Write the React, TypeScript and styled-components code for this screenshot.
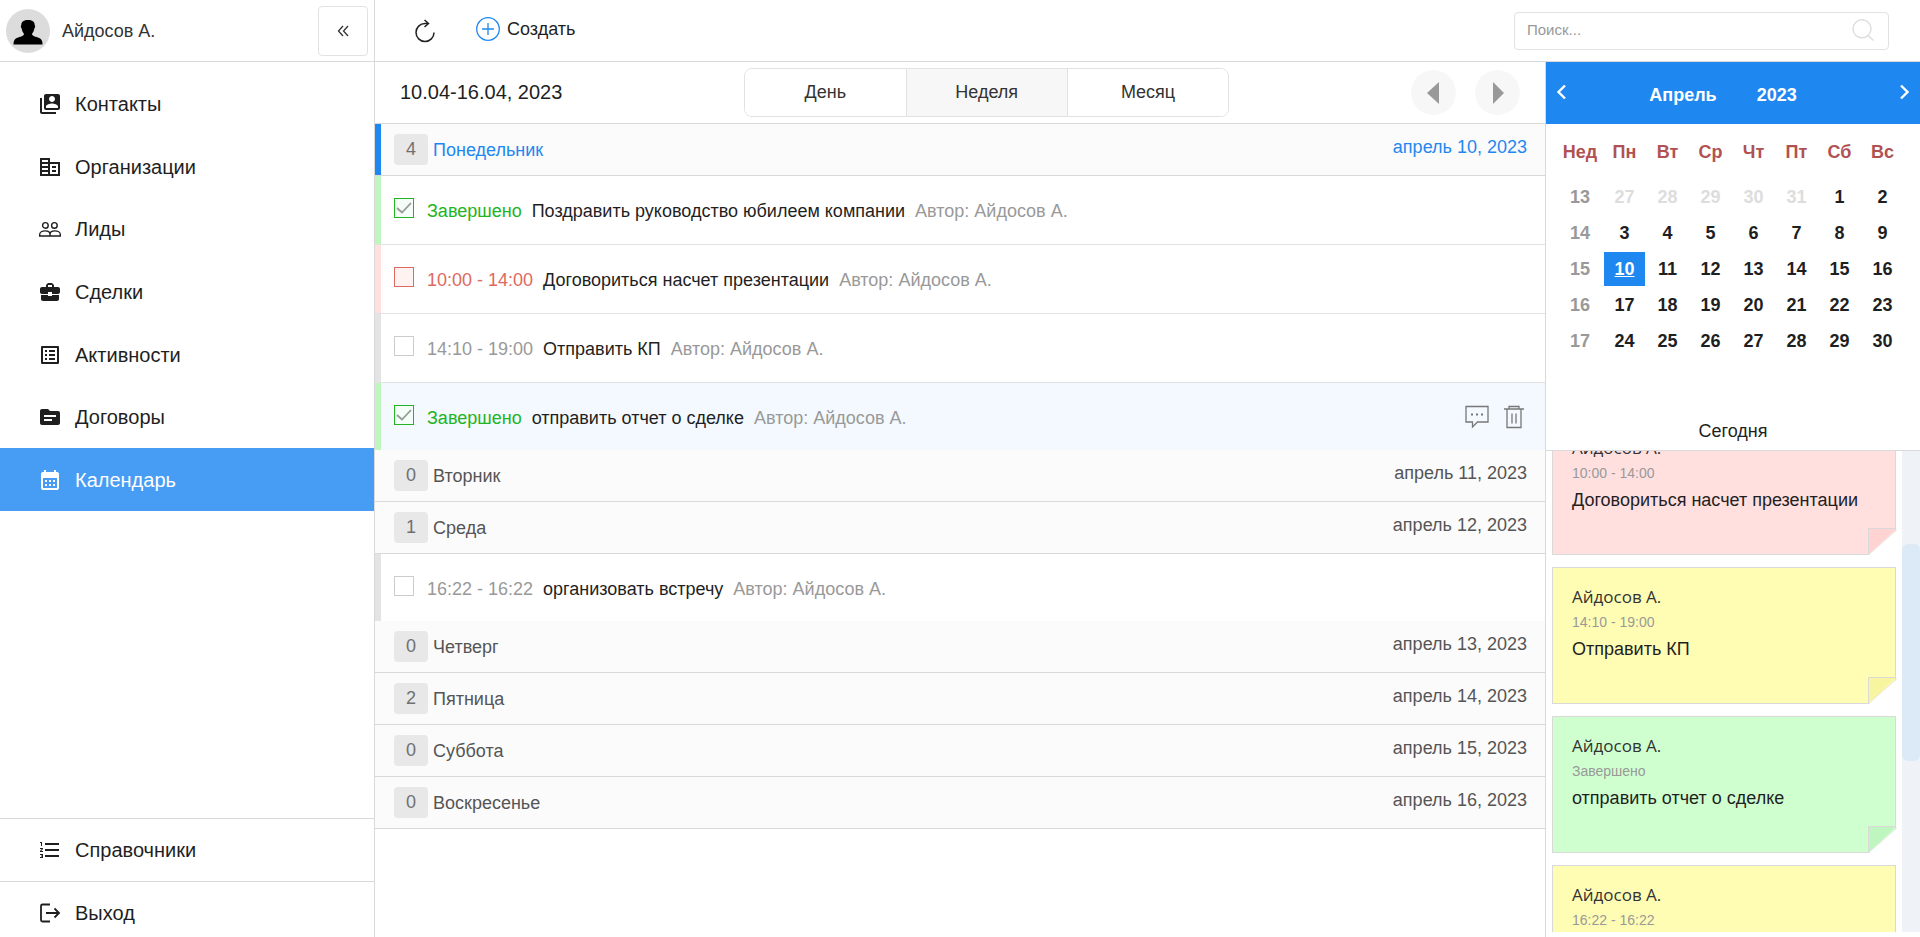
import React, { useLayoutEffect, useRef } from 'react';
import styled, { createGlobalStyle, css } from 'styled-components';
import {
  MdSwitchAccount,
  MdCorporateFare,
  MdBusinessCenter,
  MdOutlineListAlt,
  MdTopic,
  MdCalendarMonth,
  MdFormatListNumbered,
} from 'react-icons/md';

const sans = '"Liberation Sans", Arial, sans-serif';
const humanist = '"Open Sans", "Noto Sans", sans-serif';

const GlobalStyle = createGlobalStyle`
  * { box-sizing: border-box; }
  html, body, #root { height: 100%; }
  body {
    margin: 0;
    overflow: hidden;
    background: #fff;
    color: #1f1f1f;
    font: 18px/22px ${sans};
  }
  button, input { font: inherit; color: inherit; }
  button { margin: 0; padding: 0; border: 0; background: none; cursor: pointer; }
  a { color: inherit; text-decoration: none; }
  ul, h1, h2, p { margin: 0; padding: 0; font-weight: 400; font-size: inherit; list-style: none; }
`;

const line = '#d9d9d9';
const blue = '#1f87f0';

const Shell = styled.div`
  display: flex;
  height: 100vh;
  min-height: 600px;
  overflow: hidden;
`;

/* ---------- sidebar ---------- */

const Sidebar = styled.aside`
  flex: none;
  width: 375px;
  display: flex;
  flex-direction: column;
  border-right: 1px solid ${line};
`;

const Profile = styled.div`
  flex: none;
  height: 62px;
  display: flex;
  align-items: center;
  gap: 12px;
  padding: 0 6px;
  border-bottom: 1px solid ${line};
`;

const Avatar = styled.svg`
  width: 44px;
  height: 44px;
`;

const ProfileName = styled.span`
  flex: 1;
  color: #333;
`;

const CollapseButton = styled.button`
  width: 50px;
  height: 50px;
  border: 1px solid #e2e2e2;
  border-radius: 4px;
  display: grid;
  place-items: center;
`;

const Nav = styled.nav`
  flex: 1;
  padding-top: 11px;
`;

const NavItems = styled.div`
  display: grid;
  grid-auto-rows: 1fr;
  height: 438px;
`;

const NavLink = styled.a<{ $active?: boolean }>`
  display: flex;
  align-items: center;
  gap: 13px;
  padding-left: 38px;
  font-size: 20px;
  line-height: 24px;
  ${(p) => p.$active && css`
    background: #479cf3;
    color: #fff;
  `}
  svg { width: 24px; height: 24px; flex: none; }
`;

const NavFooter = styled.nav`
  flex: none;
`;

const FooterLink = styled(NavLink)`
  height: 63px;
  border-top: 1px solid ${line};
  & + & { height: 56px; padding-top: 6px; }
`;

/* ---------- workspace ---------- */

const Workspace = styled.div`
  flex: 1;
  min-width: 0;
  display: flex;
  flex-direction: column;
`;

const TopBar = styled.header`
  flex: none;
  height: 62px;
  display: flex;
  align-items: center;
  padding: 0 31px 0 38px;
  border-bottom: 1px solid ${line};
`;

const RefreshButton = styled.button`
  display: grid;
  margin-right: 39px;
`;

const CreateButton = styled.button`
  display: flex;
  align-items: center;
  gap: 7px;
  padding-bottom: 3px;
  margin-right: auto;
`;

const Search = styled.label`
  width: 375px;
  height: 38px;
  display: flex;
  align-items: center;
  padding: 0 14px 2px 12px;
  border: 1px solid #e2e2e2;
  border-radius: 4px;
`;

const SearchInput = styled.input`
  flex: 1;
  min-width: 0;
  padding: 0;
  border: 0;
  outline: 0;
  background: none;
  font-size: 15px;
  &::placeholder { color: #999; opacity: 1; }
`;

const Columns = styled.div`
  flex: 1;
  min-height: 0;
  display: flex;
`;

const Agenda = styled.main`
  flex: 1;
  min-width: 0;
`;

const AgendaBar = styled.div`
  height: 62px;
  display: flex;
  align-items: center;
  justify-content: space-between;
  padding: 0 25px;
  border-bottom: 1px solid ${line};
`;

const Range = styled.h1`
  padding-bottom: 2px;
  font-size: 20px;
  line-height: 24px;
`;

const Tabs = styled.div`
  display: flex;
  width: 485px;
  height: 49px;
  border: 1px solid #e2e2e2;
  border-radius: 8px;
  overflow: hidden;
`;

const Tab = styled.button<{ $active?: boolean }>`
  flex: 1;
  padding-bottom: 2px;
  color: #333;
  background: ${(p) => (p.$active ? '#f7f7f7' : '#fff')};
  & + & { border-left: 1px solid #e2e2e2; }
`;

const Pager = styled.div`
  display: flex;
  gap: 19px;
`;

const PagerButton = styled.button`
  width: 45px;
  height: 45px;
  border-radius: 50%;
  background: #f7f7f7;
  display: grid;
  place-items: center;
`;

const DayHeader = styled.div<{ $today?: boolean }>`
  height: 52px;
  display: flex;
  align-items: flex-start;
  padding: 10px 18px 0 19px;
  border-bottom: 1px solid ${line};
  background: #fbfbfb;
  color: ${(p) => (p.$today ? blue : '#555')};
  ${(p) => p.$today && css`box-shadow: inset 6px 0 0 ${blue};`}
`;

const Count = styled.span`
  width: 34px;
  height: 31px;
  margin-right: 5px;
  border-radius: 4px;
  background: #e8e8e8;
  color: #707070;
  line-height: 31px;
  text-align: center;
`;

const DayName = styled.h2`
  flex: 1;
  line-height: 32px;
`;

const DayDate = styled.time`
  line-height: 26px;
`;

type Tone = 'done' | 'late' | 'open';

const bars: Record<Tone, string> = { done: '#bff5bf', late: '#ffe0df', open: '#e4e4e4' };
const inks: Record<Tone, string> = { done: '#22b422', late: '#e0695f', open: '#999' };
const boxes: Record<Tone, string> = { done: '#f4fdf6', late: '#fff3f2', open: '#fff' };

const EventRow = styled.li<{ $tone: Tone; $hover?: boolean }>`
  height: 69px;
  display: flex;
  align-items: center;
  gap: 13px;
  padding: 0 20px 0 19px;
  box-shadow: inset 6px 0 0 ${(p) => bars[p.$tone]};
  border-bottom: 1px solid #e2e2e2;
  background: ${(p) => (p.$hover ? '#f3f9fe' : '#fff')};
  &:last-child { height: 67px; border-bottom: 0; }
`;

const Check = styled.span`
  display: grid;
  width: 20px;
  margin-bottom: 4px;
  & > * { grid-area: 1 / 1; }
  svg { pointer-events: none; }
`;

const CheckBox = styled.input<{ $tone: Tone }>`
  appearance: none;
  width: 20px;
  height: 20px;
  margin: 0;
  border: 1px solid ${(p) => (p.$tone === 'open' ? '#ccc' : inks[p.$tone])};
  background: ${(p) => boxes[p.$tone]};
`;

const EventLabel = styled.label`
  display: flex;
  gap: 10px;
  padding-top: 2px;
`;

const When = styled.span<{ $tone: Tone }>`
  color: ${(p) => inks[p.$tone]};
`;

const Author = styled.span`
  color: #999;
`;

const Actions = styled.span`
  display: flex;
  gap: 14px;
  margin-left: auto;
`;

const IconButton = styled.button`
  display: grid;
`;

/* ---------- right rail ---------- */

const Rail = styled.aside`
  flex: none;
  width: 375px;
  display: flex;
  flex-direction: column;
  border-left: 1px solid ${line};
`;

const MonthBar = styled.div`
  flex: none;
  height: 62px;
  display: flex;
  align-items: center;
  justify-content: space-between;
  padding: 0 10px;
  background: ${blue};
  color: #fff;
`;

const MonthTitle = styled.div`
  display: flex;
  gap: 40px;
  padding: 4px 20px 0 0;
  font-weight: 700;
`;

const MonthArrow = styled.button`
  display: grid;
  padding-bottom: 2px;
`;

const MonthTable = styled.table`
  width: 349px;
  margin-left: 10px;
  border-spacing: 2px;
  table-layout: fixed;
  text-align: center;
  font-weight: 700;
  th, td { padding: 0; height: 34px; }
  thead th { height: 52px; color: #b05252; }
  thead th:first-child { width: 44px; }
  tbody th { color: #999; }
`;

const DayButton = styled.button<{ $state?: 'muted' | 'selected' }>`
  width: 100%;
  height: 34px;
  display: block;
  font-weight: 700;
  ${(p) => p.$state === 'muted' && css`color: #ddd;`}
  ${(p) => p.$state === 'selected' && css`
    background: ${blue};
    color: #fff;
    text-decoration: underline;
  `}
`;

const TodayButton = styled.button`
  height: 91px;
  padding-top: 51px;
  flex: none;
  border-bottom: 1px solid ${line};
`;

const NotesArea = styled.div`
  flex: 1;
  min-height: 0;
  display: flex;
  margin-bottom: 5px;
`;

const NoteList = styled.ul`
  flex: 1;
  overflow-y: auto;
  scrollbar-width: none;
  padding: 0 6px;
`;

const papers: Record<Tone, { face: string; fold: string }> = {
  late: { face: '#ffe0df', fold: '#ffd3d1' },
  open: { face: '#fffdb3', fold: '#f7f59f' },
  done: { face: '#cfffcf', fold: '#bff5bf' },
};

const NoteCard = styled.li<{ $tone: Tone }>`
  position: relative;
  height: 137px;
  margin-bottom: 12px;
  padding: 18px 19px 0;
  border: 1px solid ${line};
  background: ${(p) => papers[p.$tone].face};
`;

const NoteName = styled.p`
  font: 17px/22px ${humanist};
  color: #333;
`;

const NoteTime = styled.p`
  font-size: 14px;
  line-height: 28px;
  color: #999;
`;

const NoteTitle = styled.p`
  line-height: 26px;
`;

const Fold = styled.svg`
  position: absolute;
  right: -2px;
  bottom: -1px;
  width: 29px;
  height: 27px;
`;

const ScrollTrack = styled.div`
  flex: none;
  width: 18px;
  display: grid;
  grid-template-rows: 93fr 217fr 171fr;
  background: #eff3f7;
`;

const ScrollThumb = styled.div`
  grid-row: 2;
  border-radius: 6px;
  background: #dce9f7;
`;

/* ---------- data ---------- */

type Item = { tone: Tone; when: string; title: string; hover?: boolean };
type Day = { name: string; date: string; count: number; today?: boolean; items?: Item[] };

const user = 'Айдосов А.';

const days: Day[] = [
  {
    name: 'Понедельник', date: 'апрель 10, 2023', count: 4, today: true,
    items: [
      { tone: 'done', when: 'Завершено', title: 'Поздравить руководство юбилеем компании' },
      { tone: 'late', when: '10:00 - 14:00', title: 'Договориться насчет презентации' },
      { tone: 'open', when: '14:10 - 19:00', title: 'Отправить КП' },
      { tone: 'done', when: 'Завершено', title: 'отправить отчет о сделке', hover: true },
    ],
  },
  { name: 'Вторник', date: 'апрель 11, 2023', count: 0 },
  {
    name: 'Среда', date: 'апрель 12, 2023', count: 1,
    items: [{ tone: 'open', when: '16:22 - 16:22', title: 'организовать встречу' }],
  },
  { name: 'Четверг', date: 'апрель 13, 2023', count: 0 },
  { name: 'Пятница', date: 'апрель 14, 2023', count: 2 },
  { name: 'Суббота', date: 'апрель 15, 2023', count: 0 },
  { name: 'Воскресенье', date: 'апрель 16, 2023', count: 0 },
];

const notes: Item[] = days.flatMap((d) => d.items ?? []).slice(1);

const weekdays = ['Нед', 'Пн', 'Вт', 'Ср', 'Чт', 'Пт', 'Сб', 'Вс'];
const weeks = [
  [13, 27, 28, 29, 30, 31, 1, 2],
  [14, 3, 4, 5, 6, 7, 8, 9],
  [15, 10, 11, 12, 13, 14, 15, 16],
  [16, 17, 18, 19, 20, 21, 22, 23],
  [17, 24, 25, 26, 27, 28, 29, 30],
];

const LeadsIcon = () => (
  <svg viewBox="0 0 24 24" fill="none" stroke="currentColor" strokeWidth="1.4">
    <circle cx="7.4" cy="8.4" r="2.8" />
    <circle cx="16.4" cy="8.4" r="2.8" />
    <path d="M1.700 19v-1.600c0-2 2.600-3.500 5.500-3.500s4.800 1.300 4.800 3.500V19zM12 19v-1.600c0-2.200 1.900-3.500 4.800-3.500s5.500 1.500 5.500 3.500V19z" />
  </svg>
);

const ExitIcon = () => (
  <svg viewBox="0 0 24 24" fill="none" stroke="currentColor" strokeWidth="1.800">
    <path d="M12 3.500H4.500a1.500 1.500 0 0 0-1.500 1.500v14a1.500 1.500 0 0 0 1.500 1.500H12" />
    <path d="M8 12h13M16.500 7.500L21 12l-4.500 4.500" />
  </svg>
);

const menu = [
  { label: 'Контакты', icon: <MdSwitchAccount /> },
  { label: 'Организации', icon: <MdCorporateFare /> },
  { label: 'Лиды', icon: <LeadsIcon /> },
  { label: 'Сделки', icon: <MdBusinessCenter /> },
  { label: 'Активности', icon: <MdOutlineListAlt /> },
  { label: 'Договоры', icon: <MdTopic /> },
  { label: 'Календарь', icon: <MdCalendarMonth />, active: true },
];

/* ---------- parts ---------- */

function Event({ item, id }: { item: Item; id: string }) {
  return (
    <EventRow $tone={item.tone} $hover={item.hover}>
      <Check>
        <CheckBox id={id} type="checkbox" $tone={item.tone} defaultChecked={item.tone === 'done'} />
        {item.tone === 'done' && (
          <svg width="20" height="20" fill="none" stroke="#999" strokeWidth="1.800">
            <path d="M3 10l5 4.500L17 5" />
          </svg>
        )}
      </Check>
      <EventLabel htmlFor={id}>
        <When $tone={item.tone}>{item.when}</When>
        <span>{item.title}</span>
        <Author>Автор: {user}</Author>
      </EventLabel>
      {item.hover && (
        <Actions>
          <IconButton aria-label="Комментарий">
            <svg width="24" height="24" fill="none" stroke="#777">
              <path d="M1 1.500h22v15.500H12.500L7.500 22v-5H1z" strokeWidth="1.300" />
              <path d="M6 9.500h2M11 9.500h2M16 9.500h2" strokeWidth="2.200" />
            </svg>
          </IconButton>
          <IconButton aria-label="Удалить">
            <svg width="22" height="24" fill="none" stroke="#777" strokeWidth="1.300">
              <path d="M1 4h20M6 4V1.500h10V4M4 4v18.500h14V4M9 8.500v10M13 8.500v10" />
            </svg>
          </IconButton>
        </Actions>
      )}
    </EventRow>
  );
}

function Note({ item }: { item: Item }) {
  return (
    <NoteCard $tone={item.tone}>
      <NoteName>{user}</NoteName>
      <NoteTime>{item.when}</NoteTime>
      <NoteTitle>{item.title}</NoteTitle>
      <Fold viewBox="0 0 29 27">
        <path d="M1 27L29 2v25z" fill="#fff" />
        <path d="M.5 26.500V.5H28z" fill={papers[item.tone].fold} />
        <path d="M.5 26.500V.5H27" fill="none" stroke={line} />
        <path d="M.5 26.500L29 1.500" fill="none" stroke="#e6e6e6" />
      </Fold>
    </NoteCard>
  );
}

export default function App() {
  const list = useRef<HTMLUListElement>(null);
  useLayoutEffect(() => {
    if (list.current) list.current.scrollTop = 33;
  }, []);

  return (
    <Shell>
      <GlobalStyle />
      <Sidebar>
        <Profile>
          <Avatar viewBox="0 0 44 44">
            <circle cx="22" cy="22" r="22" fill="#dcdcdc" />
            <path
              d="M7.500 35.500c0-5 2-6.200 6-7.400 2.500-.8 4.500-1.300 4.500-3.300-1.500-1.500-2-3.300-2.300-5.300-.9-.4-1.200-2.800-.4-3.200C15 12.800 18 11 22 11s7 1.800 6.700 5.300c.8.4.5 2.800-.4 3.200-.3 2-.8 3.800-2.300 5.300 0 2 2 2.500 4.500 3.300 4 1.200 6 2.400 6 7.400z"
              fill="#000"
            />
          </Avatar>
          <ProfileName>{user}</ProfileName>
          <CollapseButton aria-label="Свернуть меню">
            <svg width="12" height="12" fill="none" stroke="#333" strokeWidth="1.300">
              <path d="M6 1L1.500 6 6 11M11 1L6.500 6 11 11" />
            </svg>
          </CollapseButton>
        </Profile>
        <Nav>
          <NavItems>
            {menu.map((m) => (
              <NavLink key={m.label} href="#" $active={m.active}>
                {m.icon}
                {m.label}
              </NavLink>
            ))}
          </NavItems>
        </Nav>
        <NavFooter>
          <FooterLink href="#"><MdFormatListNumbered />Справочники</FooterLink>
          <FooterLink href="#"><ExitIcon />Выход</FooterLink>
        </NavFooter>
      </Sidebar>

      <Workspace>
        <TopBar>
          <RefreshButton aria-label="Обновить">
            <svg width="24" height="24" fill="none" stroke="#222" strokeWidth="1.500">
              <path d="M21 13.500a9 9 0 1 1-9-9h3" />
              <path d="M11.500 1l4 3.500-4 3.500" />
            </svg>
          </RefreshButton>
          <CreateButton>
            <svg width="24" height="24" fill="none" stroke={blue} strokeWidth="1.300">
              <circle cx="12" cy="12" r="11.300" />
              <path d="M12 6v12M6 12h12" />
            </svg>
            Создать
          </CreateButton>
          <Search>
            <SearchInput type="text" placeholder="Поиск..." aria-label="Поиск" />
            <svg width="22" height="22" fill="none" stroke="#ddd" strokeWidth="1.400">
              <circle cx="10" cy="9.800" r="9" />
              <path d="M16 16.500l5.500 5" />
            </svg>
          </Search>
        </TopBar>

        <Columns>
          <Agenda>
            <AgendaBar>
              <Range>10.04-16.04, 2023</Range>
              <Tabs>
                <Tab>День</Tab>
                <Tab $active>Неделя</Tab>
                <Tab>Месяц</Tab>
              </Tabs>
              <Pager>
                <PagerButton aria-label="Назад">
                  <svg width="14" height="22"><path d="M12 0v22L0 11z" fill="#999" /></svg>
                </PagerButton>
                <PagerButton aria-label="Вперёд">
                  <svg width="12" height="22"><path d="M1 0v22l11-11z" fill="#999" /></svg>
                </PagerButton>
              </Pager>
            </AgendaBar>
            {days.map((d) => (
              <section key={d.name}>
                <DayHeader $today={d.today}>
                  <Count>{d.count}</Count>
                  <DayName>{d.name}</DayName>
                  <DayDate>{d.date}</DayDate>
                </DayHeader>
                {d.items && (
                  <ul>
                    {d.items.map((it, i) => (
                      <Event key={it.title} item={it} id={`${d.date}-${i}`} />
                    ))}
                  </ul>
                )}
              </section>
            ))}
          </Agenda>

          <Rail>
            <MonthBar>
              <MonthArrow aria-label="Предыдущий месяц">
                <svg width="10" height="16" fill="none" stroke="#fff" strokeWidth="2.400">
                  <path d="M9 1.500L2.500 8 9 14.500" />
                </svg>
              </MonthArrow>
              <MonthTitle>
                <span>Апрель</span>
                <span>2023</span>
              </MonthTitle>
              <MonthArrow aria-label="Следующий месяц">
                <svg width="10" height="16" fill="none" stroke="#fff" strokeWidth="2.400">
                  <path d="M1 1.500L7.500 8 1 14.500" />
                </svg>
              </MonthArrow>
            </MonthBar>
            <MonthTable>
              <thead>
                <tr>{weekdays.map((w) => <th key={w} scope="col">{w}</th>)}</tr>
              </thead>
              <tbody>
                {weeks.map(([week, ...dates]) => (
                  <tr key={week}>
                    <th scope="row">{week}</th>
                    {dates.map((n) => (
                      <td key={n}>
                        <DayButton
                          $state={week === 13 && n > 7 ? 'muted' : week === 15 && n === 10 ? 'selected' : undefined}
                        >
                          {n}
                        </DayButton>
                      </td>
                    ))}
                  </tr>
                ))}
              </tbody>
            </MonthTable>
            <TodayButton>Сегодня</TodayButton>
            <NotesArea>
              <NoteList ref={list}>
                {notes.map((n) => <Note key={n.title} item={n} />)}
              </NoteList>
              <ScrollTrack><ScrollThumb /></ScrollTrack>
            </NotesArea>
          </Rail>
        </Columns>
      </Workspace>
    </Shell>
  );
}
